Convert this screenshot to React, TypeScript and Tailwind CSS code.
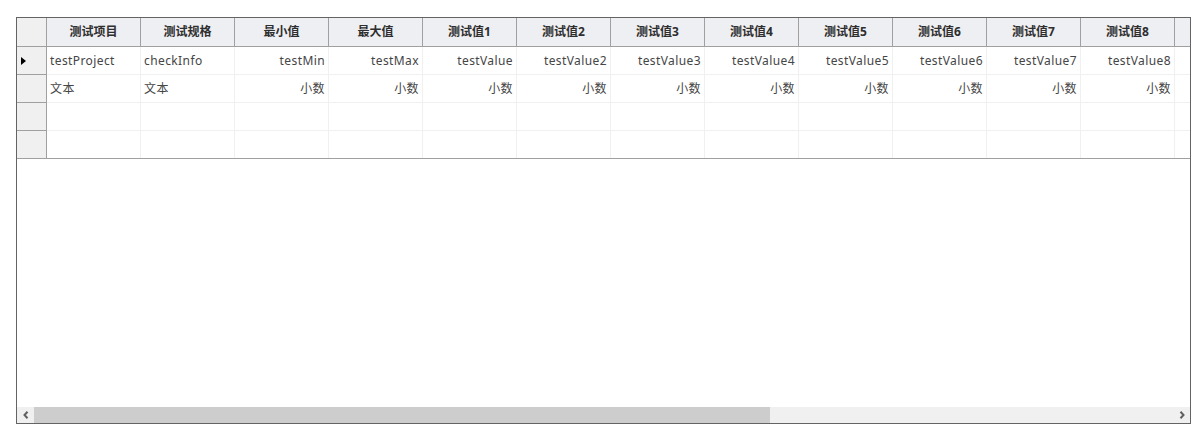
import React from "react";

const headers = ["测试项目", "测试规格", "最小值", "最大值", "测试值1", "测试值2", "测试值3", "测试值4", "测试值5", "测试值6", "测试值7", "测试值8"];
const row1 = ["testProject", "checkInfo", "testMin", "testMax", "testValue", "testValue2", "testValue3", "testValue4", "testValue5", "testValue6", "testValue7", "testValue8"];
const row2 = ["文本", "文本", "小数", "小数", "小数", "小数", "小数", "小数", "小数", "小数", "小数", "小数"];
const rows: (string[] | null)[] = [row1, row2, null, null];

const font = { fontFamily: '"Noto Sans", "Noto Sans CJK SC", sans-serif' };

export default function App() {
  return (
    <div className="w-[1200px] h-[442px] bg-white pl-[16px] pt-[17px]" style={font}>
      <div className="w-[1175px] h-[407px] border border-[#646464] flex flex-col bg-white">
        <div className="flex-1 overflow-hidden flex flex-col">
          {/* header */}
          <div className="flex h-[29px] border-b border-[#a0a0a0] bg-[#eeeff2] shrink-0">
            <div className="w-[30px] h-full border-r border-[#a0a0a0] bg-[#f0f0f0] shrink-0" />
            {headers.map((h, i) => (
              <div
                key={i}
                className="w-[94px] h-full border-r border-[#a0a0a0] shrink-0 flex items-center justify-center text-[12px] font-bold text-[#2e2e2e]"
              >
                {h}
              </div>
            ))}
            <div className="flex-1 h-full" />
          </div>
          {rows.map((r, ri) => {
            const last = ri === rows.length - 1;
            return (
              <div
                key={ri}
                className={
                  "flex h-[28px] shrink-0 border-b " +
                  (last ? "border-[#a0a0a0]" : "border-[#f0f0f0]")
                }
              >
                <div className="w-[30px] h-[28px] -mb-px border-r border-b border-[#a0a0a0] bg-[#f0f0f0] shrink-0 flex items-center pl-[4px]">
                  {ri === 0 && (
                    <svg width="5" height="8" viewBox="0 0 5 8">
                      <path d="M0 0 L5 4 L0 8 Z" fill="#000" />
                    </svg>
                  )}
                </div>
                {headers.map((_, ci) => {
                  const txt = r ? r[ci] : "";
                  const right = ci >= 2;
                  return (
                    <div
                      key={ci}
                      className={
                        "w-[94px] h-full border-r border-[#f0f0f0] shrink-0 flex items-center text-[12px] tracking-[0.4px] text-[#454545] px-[3px] " +
                        (right ? "justify-end" : "justify-start")
                      }
                    >
                      {txt}
                    </div>
                  );
                })}
                <div className="flex-1 h-full" />
              </div>
            );
          })}
        </div>
        {/* horizontal scrollbar */}
        <div className="h-[16px] flex bg-[#f0f0f0] shrink-0">
          <div className="w-[17px] h-full flex items-center justify-center">
            <svg width="6" height="8" viewBox="0 0 6 8">
              <path d="M4.5 0.8 L1.5 4 L4.5 7.2" stroke="#606060" strokeWidth="2" fill="none" />
            </svg>
          </div>
          <div className="w-[736px] h-full bg-[#cdcdcd]" />
          <div className="flex-1" />
          <div className="w-[17px] h-full flex items-center justify-center">
            <svg width="6" height="8" viewBox="0 0 6 8">
              <path d="M1.5 0.8 L4.5 4 L1.5 7.2" stroke="#606060" strokeWidth="2" fill="none" />
            </svg>
          </div>
        </div>
      </div>
    </div>
  );
}
